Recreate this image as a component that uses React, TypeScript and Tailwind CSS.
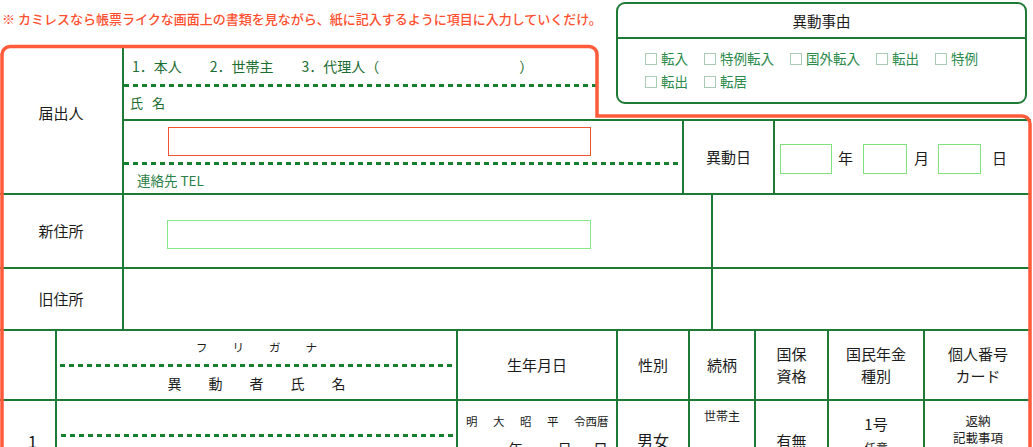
import React from "react";

function Dash({ className = "" }: { className?: string }) {
  return (
    <div
      className={
        "h-[3px] bg-[repeating-linear-gradient(to_right,#17802f_0_5px,transparent_5px_9px)] " +
        className
      }
    />
  );
}

const reasons = ["転入", "特例転入", "国外転入", "転出", "特例", "転出", "転居"];

export default function App() {
  return (
    <div className="relative w-[1033px] h-[447px] overflow-hidden bg-white text-[#1c1c1c] font-['Noto_Sans_CJK_JP','Noto_Sans',sans-serif]">
      <div className="h-[45px] pl-[2px] pt-[9px] text-[13px] leading-[20px] font-medium text-[#ff4f2f]">
        ※ カミレスなら帳票ライクな画面上の書類を見ながら、紙に記入するように項目に入力していくだけ。
      </div>

      <div className="w-[1031px] flex flex-col">
        {/* 届出人 */}
        <div className="flex h-[150px] border-b-2 border-[#1f7a36]">
          <div className="w-[124px] shrink-0 border-r-2 border-[#1f7a36] flex items-center justify-center pb-[12px] text-[15px]">
            届出人
          </div>
          <div className="flex-1 flex flex-col">
            <div className="h-[74px] flex">
              <div className="w-[474px] shrink-0 flex flex-col text-[#1c6d31]">
                <div className="mt-[12px] ml-[8px] h-[18px] leading-[18px] text-[14px] whitespace-pre">
                  1．本人　　2．世帯主　　3．代理人（　　　　　　　　　　）
                </div>
                <Dash className="mt-[9px] w-full" />
                <div className="mt-[7px] ml-[6px] h-[18px] leading-[18px] text-[13px] flex gap-[9px]">
                  <span>氏</span>
                  <span>名</span>
                </div>
              </div>
              <div className="flex-1 pl-[18px]">
                <div className="-mt-[43px] w-[411px] h-[102px] border-2 border-[#1f7a36] rounded-[9px] bg-white flex flex-col">
                  <div className="h-[35px] shrink-0 border-b-2 border-[#1f7a36] flex items-center justify-center text-[14.5px]">
                    異動事由
                  </div>
                  <div className="pl-[27px] pr-[2px] pt-[10px] flex flex-wrap gap-x-[16px] gap-y-[4px] text-[13.5px] leading-[19px] text-[#2b8a4b]">
                    {reasons.map((t, i) => (
                      <span key={i} className="flex items-center gap-[4px]">
                        <span className="w-[12px] h-[12px] border border-[#a9cbb3]" />
                        {t}
                      </span>
                    ))}
                  </div>
                </div>
              </div>
            </div>
            <div className="flex-1 flex border-t-2 border-[#1f7a36]">
              <div className="w-[560px] shrink-0 border-r-2 border-[#1f7a36] flex flex-col">
                <div className="mt-[6px] ml-[44px] w-[423px] h-[29px] border-[1.5px] border-[#f0532f]" />
                <Dash className="mt-[6px] w-full" />
                <div className="mt-[7px] ml-[13px] text-[13.5px] leading-[17px] text-[#2b8048]">
                  連絡先 TEL
                </div>
              </div>
              <div className="w-[91px] shrink-0 border-r-2 border-[#1f7a36] flex items-center justify-center text-[15px]">
                異動日
              </div>
              <div className="flex-1 flex items-center pt-[3px] text-[15px]">
                <div className="ml-[5px] w-[52px] h-[30px] border border-[#7fe27f]" />
                <span className="ml-[6px]">年</span>
                <div className="ml-[10px] w-[44px] h-[30px] border border-[#7fe27f]" />
                <span className="ml-[7px]">月</span>
                <div className="ml-[9px] w-[43px] h-[30px] border border-[#7fe27f]" />
                <span className="ml-[11px]">日</span>
              </div>
            </div>
          </div>
        </div>

        {/* 新住所 */}
        <div className="flex h-[74px] border-b-2 border-[#1f7a36]">
          <div className="w-[124px] shrink-0 border-r-2 border-[#1f7a36] flex items-center justify-center text-[15px]">
            新住所
          </div>
          <div className="w-[589px] shrink-0 border-r-2 border-[#1f7a36]">
            <div className="mt-[25px] ml-[43px] w-[424px] h-[29px] border border-[#86e886]" />
          </div>
          <div className="flex-1" />
        </div>

        {/* 旧住所 */}
        <div className="flex h-[62px] border-b-2 border-[#1f7a36]">
          <div className="w-[124px] shrink-0 border-r-2 border-[#1f7a36] flex items-center justify-center text-[15px]">
            旧住所
          </div>
          <div className="w-[589px] shrink-0 border-r-2 border-[#1f7a36]" />
          <div className="flex-1" />
        </div>

        {/* table header */}
        <div className="flex h-[70px] border-b-2 border-[#1f7a36] text-[15px]">
          <div className="w-[57px] shrink-0 border-r-2 border-[#1f7a36]" />
          <div className="w-[401px] shrink-0 border-r-2 border-[#1f7a36] flex flex-col">
            <div className="mt-[8px] h-[16px] leading-[16px] text-[11.5px] flex justify-center gap-[25px]">
              <span>フ</span>
              <span>リ</span>
              <span>ガ</span>
              <span>ナ</span>
            </div>
            <Dash className="mt-[9px] ml-[3px]" />
            <div className="mt-[6px] h-[20px] leading-[20px] text-[14px] flex justify-center gap-[27px]">
              <span>異</span>
              <span>動</span>
              <span>者</span>
              <span>氏</span>
              <span>名</span>
            </div>
          </div>
          <div className="w-[160px] shrink-0 border-r-2 border-[#1f7a36] flex items-center justify-center">
            生年月日
          </div>
          <div className="w-[72px] shrink-0 border-r-2 border-[#1f7a36] flex items-center justify-center">
            性別
          </div>
          <div className="w-[66px] shrink-0 border-r-2 border-[#1f7a36] flex items-center justify-center">
            続柄
          </div>
          <div className="w-[73px] shrink-0 border-r-2 border-[#1f7a36] flex flex-col items-center justify-center leading-[22px]">
            <span>国保</span>
            <span>資格</span>
          </div>
          <div className="w-[96px] shrink-0 border-r-2 border-[#1f7a36] flex flex-col items-center justify-center leading-[22px]">
            <span>国民年金</span>
            <span>種別</span>
          </div>
          <div className="flex-1 flex flex-col items-center justify-center leading-[22px]">
            <span>個人番号</span>
            <span>カード</span>
          </div>
        </div>

        {/* row 1 */}
        <div className="flex h-[90px] border-b-2 border-[#1f7a36]">
          <div className="w-[57px] shrink-0 border-r-2 border-[#1f7a36] flex justify-center pl-[10px] pt-[28px] text-[17px] leading-[24px]">
            1
          </div>
          <div className="w-[401px] shrink-0 border-r-2 border-[#1f7a36] flex flex-col">
            <Dash className="mt-[33px] ml-[4px]" />
          </div>
          <div className="w-[160px] shrink-0 border-r-2 border-[#1f7a36] flex flex-col">
            <div className="mt-[12px] ml-[8px] h-[17px] leading-[17px] text-[11.5px] flex gap-[15.5px]">
              <span>明</span>
              <span>大</span>
              <span>昭</span>
              <span>平</span>
              <span>令西暦</span>
            </div>
            <div className="mt-[9px] h-[20px] leading-[20px] text-[15px] flex">
              <span className="ml-[50px]">年</span>
              <span className="ml-[34px]">月</span>
              <span className="ml-[21px]">日</span>
            </div>
          </div>
          <div className="w-[72px] shrink-0 border-r-2 border-[#1f7a36] flex justify-center pt-[28px] text-[16px] leading-[22px]">
            男女
          </div>
          <div className="w-[66px] shrink-0 border-r-2 border-[#1f7a36] flex justify-center pt-[6px] text-[12px] leading-[17px]">
            世帯主
          </div>
          <div className="w-[73px] shrink-0 border-r-2 border-[#1f7a36] flex justify-center pt-[29px] text-[15px] leading-[22px]">
            有無
          </div>
          <div className="w-[96px] shrink-0 border-r-2 border-[#1f7a36] flex flex-col items-center pt-[12px]">
            <span className="text-[15px] leading-[22px]">1号</span>
            <span className="mt-[4px] text-[12px] leading-[17px]">任意</span>
          </div>
          <div className="flex-1 flex flex-col items-center pt-[11px] text-[12.5px] leading-[17px]">
            <span>返納</span>
            <span>記載事項</span>
          </div>
        </div>
      </div>

      {/* orange highlight frame drawn over the form */}
      <svg
        className="absolute left-0 top-0 pointer-events-none"
        width="1033"
        height="447"
        viewBox="0 0 1033 447"
        fill="none"
      >
        <path
          d="M2 470 V54 A8 8 0 0 1 10 46.5 H589 A8 8 0 0 1 597 54.5 V116 H1022 A8 8 0 0 1 1030 124 V470"
          stroke="#ff5a3a"
          strokeWidth="3.5"
        />
      </svg>
    </div>
  );
}
